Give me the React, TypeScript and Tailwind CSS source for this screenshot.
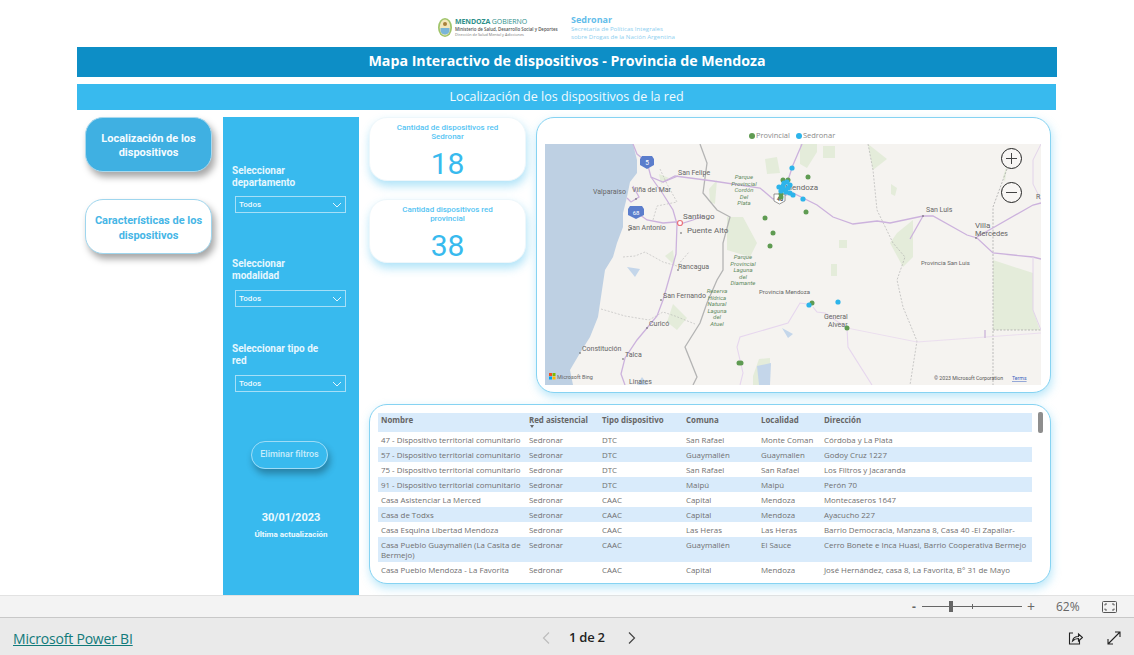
import React from "react";

const din = "font-['Roboto',sans-serif]";
const seg = "font-['Open_Sans',sans-serif]";

function Dropdown() {
  return (
    <div className="ml-[3px] flex h-[17px] w-[111px] items-center justify-between border border-[#a6dff7] pl-[3px] pr-[3px]">
      <span className={`${din} text-[8px] font-medium text-[#eef9fe]`}>Todos</span>
      <svg width="10" height="6" viewBox="0 0 10 6" fill="none" stroke="#e6f6fd" strokeWidth="1">
        <path d="M1 1l4 4 4-4" />
      </svg>
    </div>
  );
}

function Label({ children, className = "" }: { children: React.ReactNode; className?: string }) {
  return (
    <div className={`${din} text-[10px] font-bold leading-[12px] text-[#e6f7fe] ${className}`}>{children}</div>
  );
}

function Kpi({ title, value }: { title: React.ReactNode; value: string }) {
  return (
    <div className="flex h-[64px] flex-col items-center rounded-[18px] border border-[#eef7fb] bg-white pt-[5px] shadow-[1px_5px_10px_rgba(56,186,238,0.4)]">
      <div className={`${din} text-center text-[8px] font-medium leading-[9px] text-[#55c4f3]`}>{title}</div>
      <div className={`${din} mt-[6px] text-[30px] leading-[34px] text-[#38baee]`}>{value}</div>
    </div>
  );
}

const blue: [number, number][] = [
  [247, 24], [242, 38], [234, 43], [238, 42], [240, 46], [245, 41], [239, 39], [236, 47], [237, 44], [243, 44], [241, 48], [245, 49], [248, 51], [258, 55], [293, 158], [264, 161],
];
const green: [number, number][] = [
  [263, 33], [238, 36], [243, 36], [236, 50], [236, 53], [261, 68], [220, 74], [228, 89], [225, 102], [267, 159], [302, 184], [196, 219], [194, 219],
];

function RoadLabel({ x, y, t, s = 7 }: { x: number; y: number; t: string; s?: number }) {
  return (
    <text x={x} y={y} fontSize={s} fill="#666" fontFamily="Roboto, sans-serif">
      {t}
    </text>
  );
}

function ParkLabel({ x, y, lines }: { x: number; y: number; lines: string[] }) {
  return (
    <g fontSize="6" fontStyle="italic" fill="#5f8a5f" textAnchor="middle" fontFamily="Roboto, sans-serif">
      {lines.map((l, i) => (
        <text key={l} x={x} y={y + i * 6.6}>
          {l}
        </text>
      ))}
    </g>
  );
}

function MapArt() {
  return (
    <svg viewBox="0 0 496 241" width="496" height="241" className="block">
      <rect width="496" height="241" fill="#f5f3f0" />
      <path d="M0 0H88L92 16V29L85 38L82 53L78 69V83L72 99L68 113L60 126L57 146L53 173L45 193L35 209L25 226L28 241H0Z" fill="#bed0e3" />
      <g fill="#e4ecda">
        <path d="M448 116L488 129V166L495 186H448Z" />
        <path d="M352 89L368 76L368 113L358 123L345 99Z" />
        <path d="M182 73H198L212 99L205 113L182 106Z" />
        <path d="M255 0H272V8L262 24L255 20Z" />
        <path d="M220 15L232 13L235 29L222 30Z" />
        <path d="M278 2H290V14H278Z" />
        <path d="M323 0L342 15L328 26Z" />
        <path d="M346 40L352 44L350 52L346 50Z" />
        <path d="M294 96H302V104H294Z" />
        <path d="M286 120H292V132H286Z" />
        <path d="M458 33L462 20L460 38Z" />
        <path d="M164 45L172 36L170 60L165 58Z" />
        <path d="M128 160L142 174L132 186L122 178Z" />
        <path d="M114 30L124 34L116 40Z" />
        <path d="M120 112L128 106L130 122Z" />
        <path d="M208 232L214 215L225 214V241H208Z" />
      </g>
      <g fill="#c4d6ea">
        <path d="M237 184L248 190L243 194Z" />
        <path d="M212 222L226 219L225 241H214Z" />
        <path d="M97 233L103 241H92Z" />
        <path d="M82 123L95 125L90 133Z" />
      </g>
      <g fill="none" stroke="#b4b4b4" strokeWidth="1.3">
        <path d="M155 0L162 19L158 49L172 66L185 73L178 99L178 126L172 136L162 159L155 179L140 203L152 233L148 241" />
      </g>
      <g fill="none" stroke="#aaaaaa" strokeWidth="0.6" strokeDasharray="2 1.5">
        <path d="M323 0L328 26L332 66L348 99L360 113L352 136L358 163L372 197L365 241" />
        <path d="M462 25L448 63V241" strokeWidth="0.8" />
        <path d="M448 186H496" strokeWidth="0.8" />
        <path d="M56 165L80 172L104 176L118 168L130 172L150 180" strokeWidth="0.5" />
        <path d="M78 113L90 112L100 108L118 118L132 122L144 108" strokeWidth="0.5" />
        <path d="M115 25L122 40L132 58L112 62L108 76" strokeWidth="0.5" />
      </g>
      <g fill="none" stroke="#ccb2dd" strokeWidth="1.3">
        <path d="M88 0L92 10L102 18L106 33L118 38L133 32" />
        <path d="M106 33L118 50L128 66L132 80L131 110L126 128L118 156L112 172L102 184L92 196L80 214L76 230L80 241" />
        <path d="M88 42L94 53L86 58L82 54" />
        <path d="M91 68L102 76L118 79L130 78L135 80L148 76L158 72" />
        <path d="M118 38L130 32L168 37L215 44L228 55L248 49L272 61L288 73L308 80L332 77L345 79L378 72L388 72L422 91L432 94L448 109L488 113L496 115" />
        <path d="M378 72L365 95" />
        <path d="M432 93L488 61L496 59" />
        <path d="M496 0L488 16V40L496 56" strokeWidth="1" stroke="#e2d3ea" />
        <path d="M488 113V166L496 186" stroke="#e2d3ea" strokeWidth="1" />
        <path d="M257 0L248 21L243 36" />
      </g>
      <g fill="none" stroke="#e6d6ee" strokeWidth="1.1">
        <path d="M262 160L255 159L243 179L195 193L192 203L198 229L195 241" />
        <path d="M268 163L272 168L280 169L302 184L303 203L327 241" />
        <path d="M302 184L372 198L496 189" strokeWidth="0.7" />
      </g>
      <path d="M440 186V194" stroke="#d2bede" strokeWidth="1.6" />
      <g>
        <path d="M97 12h10l2 3v6l-7 4-7-4v-6z" fill="#5b7dcc" />
        <text x="102" y="21" fontSize="6.5" fill="#fff" textAnchor="middle" fontFamily="Roboto, sans-serif">5</text>
        <path d="M85 62h12l2 3v6l-8 4-8-4v-6z" fill="#5b7dcc" />
        <text x="91" y="71" fontSize="6" fill="#fff" textAnchor="middle" fontFamily="Roboto, sans-serif">68</text>
        <path d="M229 50h11v7l-5.500 3-5.500-3z" fill="#fff" stroke="#555" strokeWidth="0.6" />
        <text x="235" y="57" fontSize="5.500" fontWeight="bold" fill="#444" textAnchor="middle" fontFamily="Roboto, sans-serif">40</text>
        <circle cx="135" cy="79" r="2.500" fill="#fff" stroke="#e9737b" strokeWidth="1.2" />
      </g>
      <RoadLabel x={133} y={31} t="San Felipe" />
      <RoadLabel x={48} y={50} t="Valparaíso" />
      <RoadLabel x={87} y={48} t="Viña del Mar" />
      <RoadLabel x={138} y={75} t="Santiago" s={8} />
      <RoadLabel x={142} y={89} t="Puente Alto" s={8} />
      <RoadLabel x={83} y={86} t="San Antonio" />
      <RoadLabel x={133} y={125} t="Rancagua" />
      <RoadLabel x={118} y={154} t="San Fernando" />
      <RoadLabel x={104} y={182} t="Curicó" />
      <RoadLabel x={37} y={207} t="Constitución" />
      <RoadLabel x={80} y={213} t="Talca" />
      <RoadLabel x={84} y={240} t="Linares" />
      <RoadLabel x={240} y={46} t="Mendoza" s={8} />
      <RoadLabel x={381} y={68} t="San Luis" />
      <RoadLabel x={430} y={84} t="Villa" s={8} />
      <RoadLabel x={430} y={92} t="Mercedes" s={7.500} />
      <RoadLabel x={376} y={121} t="Provincia San Luis" s={6} />
      <RoadLabel x={214} y={150} t="Provincia Mendoza" s={6} />
      <RoadLabel x={279} y={175} t="General" />
      <RoadLabel x={283} y={183} t="Alvear" />
      <RoadLabel x={491} y={55} t="R" />
      <ParkLabel x={199} y={35} lines={["Parque", "Provincial", "Cordón", "Del", "Plata"]} />
      <ParkLabel x={198} y={115} lines={["Parque", "Provincial", "Laguna", "del", "Diamante"]} />
      <ParkLabel x={172} y={149} lines={["Reserva", "Hídrica", "Natural", "Laguna", "del", "Atuel"]} />
      {[[91, 55], [86, 84], [84, 86], [136, 89], [133, 126], [116, 156], [102, 184], [35, 209], [78, 215], [378, 72], [431, 94]].map(([x, y]) => (
        <circle key={`${x}-${y}`} cx={x} cy={y} r="0.8" fill="#555" />
      ))}
      {green.map(([x, y]) => (
        <circle key={`g${x}-${y}`} cx={x} cy={y} r="2.5" fill="#5f9b52" />
      ))}
      {blue.map(([x, y]) => (
        <circle key={`b${x}-${y}`} cx={x} cy={y} r="2.6" fill="#2db4ea" />
      ))}
      <g>
        <rect x="4" y="229" width="3" height="3" fill="#f25022" />
        <rect x="7.500" y="229" width="3" height="3" fill="#7fba00" />
        <rect x="4" y="232.500" width="3" height="3" fill="#00a4ef" />
        <rect x="7.500" y="232.500" width="3" height="3" fill="#ffb900" />
        <text x="12" y="235" fontSize="5.500" fill="#666" fontFamily="Roboto, sans-serif">Microsoft Bing</text>
        <text x="389" y="236" fontSize="5.200" fill="#555" fontFamily="Roboto, sans-serif">© 2023 Microsoft Corporation</text>
        <text x="467" y="236" fontSize="5.200" fill="#3d63c0" textDecoration="underline" fontFamily="Roboto, sans-serif">Terms</text>
      </g>
    </svg>
  );
}

function ZoomBtn({ plus }: { plus?: boolean }) {
  return (
    <div className="flex h-[21px] w-[21px] items-center justify-center rounded-full border border-[#222] bg-white/30">
      <svg width="13" height="13" viewBox="0 0 13 13" stroke="#444" strokeWidth="1">
        <path d="M1 6.500h11" />
        {plus && <path d="M6.500 1v11" />}
      </svg>
    </div>
  );
}

const rows = [
  ["47 - Dispositivo territorial comunitario", "Sedronar", "DTC", "San Rafael", "Monte Coman", "Córdoba y La Plata"],
  ["57 - Dispositivo territorial comunitario", "Sedronar", "DTC", "Guaymallén", "Guaymallen", "Godoy Cruz 1227"],
  ["75 - Dispositivo territorial comunitario", "Sedronar", "DTC", "San Rafael", "San Rafael", "Los Filtros y Jacaranda"],
  ["91 - Dispositivo territorial comunitario", "Sedronar", "DTC", "Maipú", "Maipú", "Perón 70"],
  ["Casa Asistenciar La Merced", "Sedronar", "CAAC", "Capital", "Mendoza", "Montecaseros 1647"],
  ["Casa de Todxs", "Sedronar", "CAAC", "Capital", "Mendoza", "Ayacucho 227"],
  ["Casa Esquina Libertad Mendoza", "Sedronar", "CAAC", "Las Heras", "Las Heras", "Barrio Democracia, Manzana 8, Casa 40 -El Zapallar-"],
  ["Casa Pueblo Guaymallén (La Casita de Bermejo)", "Sedronar", "CAAC", "Guaymallén", "El Sauce", "Cerro Bonete e Inca Huasi, Barrio Cooperativa Bermejo"],
  ["Casa Pueblo Mendoza - La Favorita", "Sedronar", "CAAC", "Capital", "Mendoza", "José Hernández, casa 8, La Favorita, B° 31 de Mayo"],
];
const heads = ["Nombre", "Red asistencial", "Tipo dispositivo", "Comuna", "Localidad", "Dirección"];
const widths = ["w-[148px]", "w-[73px]", "w-[84px]", "w-[75px]", "w-[63px]", "w-[211px]"];

function Crest() {
  return (
    <svg width="16" height="21" viewBox="0 0 16 21">
      <ellipse cx="8" cy="10.500" rx="7" ry="9.500" fill="#9fc46a" />
      <ellipse cx="8" cy="10.500" rx="5.300" ry="8" fill="#f2e7bb" />
      <path d="M3.500 11h9v2.500c0 2.500-2.500 4-4.500 4s-4.500-1.500-4.500-4z" fill="#78b5d8" />
      <circle cx="8" cy="7" r="2" fill="#a8803c" />
    </svg>
  );
}

export default function App() {
  return (
    <div className={`${seg} flex h-[655px] w-[1134px] flex-col overflow-hidden bg-white`}>
      <div className="h-[595px] shrink-0">
        <div className="flex h-[47px] items-center pl-[437px] pt-[7px]">
          <Crest />
          <div className="ml-[2px] w-[117px]">
            <div className="text-[7px] leading-[9px] tracking-[-0.1px] text-[#2e8f8a]">
              <b>MENDOZA</b> GOBIERNO
            </div>
            <div className="text-[4.400px] font-semibold leading-[6px] whitespace-nowrap text-[#555]">Ministerio de Salud, Desarrollo Social y Deportes</div>
            <div className="text-[3.800px] leading-[5px] whitespace-nowrap text-[#777]">Dirección de Salud Mental y Adicciones</div>
          </div>
          <div className="ml-[-1px] text-[#8ed0f0]">
            <div className="text-[9px] font-bold leading-[11px] text-[#63bdea]">Sedronar</div>
            <div className="text-[6.100px] leading-[8px] whitespace-nowrap">Secretaría de Políticas Integrales</div>
            <div className="text-[6.100px] leading-[8px] whitespace-nowrap">sobre Drogas de la Nación Argentina</div>
          </div>
        </div>

        <div className="mx-[77px] flex h-[30px] w-[980px] items-center justify-center bg-[#0d8ec6] pb-[3px] text-[14.200px] font-bold text-white">
          Mapa Interactivo de dispositivos - Provincia de Mendoza
        </div>
        <div className="mx-[77px] mt-[7px] flex h-[26px] w-[979px] items-center justify-center bg-[#38baee] text-[12.500px] text-[#f2fbff]">
          Localización de los dispositivos de la red
        </div>

        <div className="mt-[7px] flex h-[478px] pl-[85px]">
          <div className="flex w-[127px] flex-col gap-[27px]">
            <div className={`${din} flex h-[55px] items-center justify-center rounded-[18px] border border-[#a9d9ee] bg-[#3fb0e2] pt-[3px] text-center text-[11px] leading-[14px] font-bold text-[#f4fbff] shadow-[3px_5px_7px_rgba(0,0,0,0.35)]`}>
              Localización de los<br />dispositivos
            </div>
            <div className={`${din} flex h-[55px] items-center justify-center rounded-[18px] border border-[#9fd6ee] bg-white pt-[2px] text-center text-[11px] leading-[15px] font-bold text-[#47b6e6] shadow-[3px_5px_7px_rgba(0,0,0,0.35)]`}>
              Características de los<br />dispositivos
            </div>
          </div>

          <div className="ml-[11px] flex w-[136px] flex-col bg-[#38baee] pl-[9px]">
            <Label className="mt-[48px]">Seleccionar<br />departamento</Label>
            <div className="mt-[7px]"><Dropdown /></div>
            <Label className="mt-[45px]">Seleccionar<br />modalidad</Label>
            <div className="mt-[8px]"><Dropdown /></div>
            <Label className="mt-[36px]">Seleccionar tipo de<br />red</Label>
            <div className="mt-[8px]"><Dropdown /></div>
            <div className={`${din} ml-[19px] mt-[49px] flex h-[28px] w-[77px] items-center justify-center rounded-full border border-[#9edcf6] text-[9px] font-medium text-[#c8ecfb] shadow-[2px_5px_7px_rgba(0,0,0,0.3)]`}>
              Eliminar filtros
            </div>
            <div className={`${din} -ml-[9px] mt-[42px] text-center text-[11px] leading-[14px] font-bold text-[#eefaff]`}>30/01/2023</div>
            <div className={`${din} -ml-[9px] mt-[5px] text-center text-[8px] leading-[10px] font-bold text-[#eefaff]`}>Última actualización</div>
          </div>

          <div className="ml-[10px] flex w-[682px] flex-col gap-[11px]">
            <div className="flex gap-[10px]">
              <div className="flex w-[157px] flex-col gap-[18px]">
                <Kpi title={<>Cantidad de dispositivos red<br />Sedronar</>} value="18" />
                <Kpi title={<>Cantidad dispositivos red<br />provincial</>} value="38" />
              </div>
              <div className="h-[276px] w-[515px] rounded-[18px] border border-[#86d3f2] bg-white pl-[8px] pt-[9px] shadow-[1px_4px_10px_rgba(56,186,238,0.35)]">
                <div className="flex h-[17px] items-center text-[7.500px] text-[#8a8a8a]">
                  <div className="ml-[204px] h-[6px] w-[6px] rounded-full bg-[#5f9b52]" />
                  <span className="ml-[1px]">Provincial</span>
                  <div className="ml-[6px] h-[6px] w-[6px] rounded-full bg-[#2db4ea]" />
                  <span className="ml-[1px]">Sedronar</span>
                </div>
                <div className="relative h-[241px] w-[496px]">
                  <MapArt />
                  <div className="absolute right-[19px] top-[4px] flex flex-col gap-[13px]">
                    <ZoomBtn plus />
                    <ZoomBtn />
                  </div>
                </div>
              </div>
            </div>

            <div className="relative h-[180px] w-[682px] rounded-[18px] border border-[#86d3f2] bg-white pl-[8px] pt-[8px] shadow-[1px_4px_10px_rgba(56,186,238,0.35)]">
              <table className="w-[654px] table-fixed border-collapse text-left text-[7.900px] leading-[10px] text-[#707070]">
                <thead>
                  <tr className="h-[19px] bg-[#d9ebfb]">
                    {heads.map((h, i) => (
                      <th key={h} className={`${widths[i]} relative p-0 pl-[3px] pb-[5px] align-middle text-[7.900px] font-bold text-[#666]`}>
                        {h}
                        {i === 1 && <span className="absolute left-[4px] top-[12px] h-0 w-0 border-x-[2.5px] border-t-[3px] border-x-transparent border-t-[#666]" />}
                      </th>
                    ))}
                  </tr>
                </thead>
                <tbody>
                  {rows.map((r, i) => (
                    <tr key={r[0]} className={i % 2 ? "bg-[#d9ebfb]" : ""}>
                      {r.map((c, j) => (
                        <td key={j} className="h-[15px] p-0 pl-[3px] pr-[1px] py-[2.5px] align-top">
                          {c}
                        </td>
                      ))}
                    </tr>
                  ))}
                </tbody>
              </table>
              <div className="absolute right-[7px] top-[7px] h-[21px] w-[5px] rounded-[2px] bg-[#8e8e8e]" />
            </div>
          </div>
        </div>
      </div>

      <div className="flex h-[23px] shrink-0 items-center border-y border-y-[#e2e2e2] border-b-[#c8c8c8] bg-[#f3f3f3] pl-[912px] text-[#666]">
        <span className="w-[10px] text-[12px] font-bold leading-none">-</span>
        <div className="relative h-[1px] w-[100px] bg-[#666]">
          <div className="absolute left-[27px] top-[-5px] h-[11px] w-[4px] bg-[#666]" />
          <div className="absolute left-[50px] top-[-2px] h-[5px] w-[1px] bg-[#666]" />
        </div>
        <span className="ml-[5px] w-[12px] text-[14px] leading-none">+</span>
        <span className="ml-[17px] text-[12px]">62%</span>
        <svg className="ml-[22px]" width="15" height="12" viewBox="0 0 15 12" fill="none" stroke="#555">
          <rect x="0.5" y="0.5" width="14" height="11" rx="1" />
          <path d="M3 4.500V3h2M10 3h2v1.500M12 7.500V9h-2M5 9H3V7.500" />
        </svg>
      </div>

      <div className="relative flex h-[37px] shrink-0 items-center justify-between bg-[#eaeaea] pl-[13px] pr-[13px] pt-[3px]">
        <a className="text-[14px] tracking-[-0.2px] text-[#117a7a] underline">Microsoft Power BI</a>
        <div className="absolute left-[541px] flex items-center">
          <svg width="10" height="14" viewBox="0 0 10 14" fill="none" stroke="#bdbdbd" strokeWidth="1.2"><path d="M8 1.500L2.500 7 8 12.500" /></svg>
          <span className="ml-[18px] text-[13px] font-semibold tracking-[-0.25px] text-[#222]">1 de 2</span>
          <svg className="ml-[22px]" width="10" height="14" viewBox="0 0 10 14" fill="none" stroke="#444" strokeWidth="1.2"><path d="M2 1.500L7.500 7 2 12.500" /></svg>
        </div>
        <div className="flex items-center gap-[24px]">
          <svg width="15" height="15" viewBox="0 0 15 15" fill="none" stroke="#222" strokeWidth="1.1">
            <path d="M5 2H1.500v11h10V9" />
            <path d="M4.500 10c.5-3 3-4.500 6-4.500V3l4 3.500-4 3.500V7.500c-2.500 0-4.500 1-6 2.500z" />
          </svg>
          <svg width="14" height="14" viewBox="0 0 14 14" fill="none" stroke="#222" strokeWidth="1.1">
            <path d="M1 13L13 1M8 1h5v5M1 8v5h5" />
          </svg>
        </div>
      </div>
    </div>
  );
}
